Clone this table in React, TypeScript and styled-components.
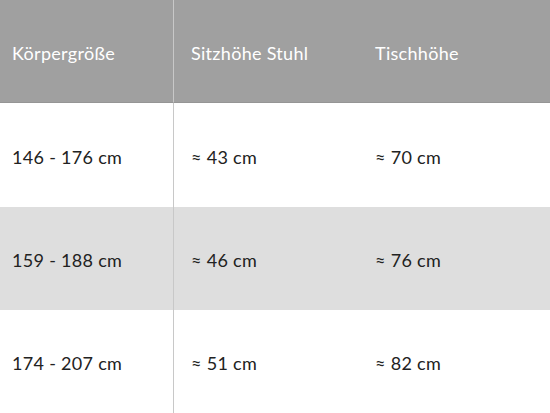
import React from "react";
import styled, { createGlobalStyle } from "styled-components";

const GlobalStyle = createGlobalStyle`
  html, body {
    margin: 0;
    padding: 0;
    background: #ffffff;
  }
`;

const Table = styled.div`
  display: grid;
  grid-template-columns: 174px 184px 1fr;
  grid-template-rows: 103px 104px 103px 103px;
  width: 550px;
  height: 413px;
  font-family: "Lato", "Open Sans", sans-serif;
  font-weight: 400;
  font-size: 18px;
`;

interface CellProps {
  $head?: boolean;
  $shaded?: boolean;
  $divider?: boolean;
}

const Cell = styled.div<CellProps>`
  display: flex;
  align-items: center;
  box-sizing: border-box;
  padding-left: ${(p) => (p.$divider ? "12px" : "17px")};
  padding-top: 3px;
  background: ${(p) => (p.$head ? "#a0a0a0" : p.$shaded ? "#dedede" : "#ffffff")};
  color: ${(p) => (p.$head ? "#ffffff" : "#222222")};
  border-right: ${(p) => (p.$divider ? "1px solid #c8c8c8" : "none")};
  border-bottom: ${(p) => (p.$head ? "1px solid #959595" : "none")};
  letter-spacing: 0.3px;
`;

const header = ["Körpergröße", "Sitzhöhe Stuhl", "Tischhöhe"];

const rows = [
  ["146 - 176 cm", "≈ 43 cm", "≈ 70 cm"],
  ["159 - 188 cm", "≈ 46 cm", "≈ 76 cm"],
  ["174 - 207 cm", "≈ 51 cm", "≈ 82 cm"],
];

export default function App() {
  return (
    <>
      <GlobalStyle />
      <Table>
        {header.map((h, i) => (
          <Cell key={h} $head $divider={i === 0}>
            {h}
          </Cell>
        ))}
        {rows.map((row, r) =>
          row.map((v, i) => (
            <Cell key={`${r}-${i}`} $shaded={r === 1} $divider={i === 0}>
              {v}
            </Cell>
          ))
        )}
      </Table>
    </>
  );
}
